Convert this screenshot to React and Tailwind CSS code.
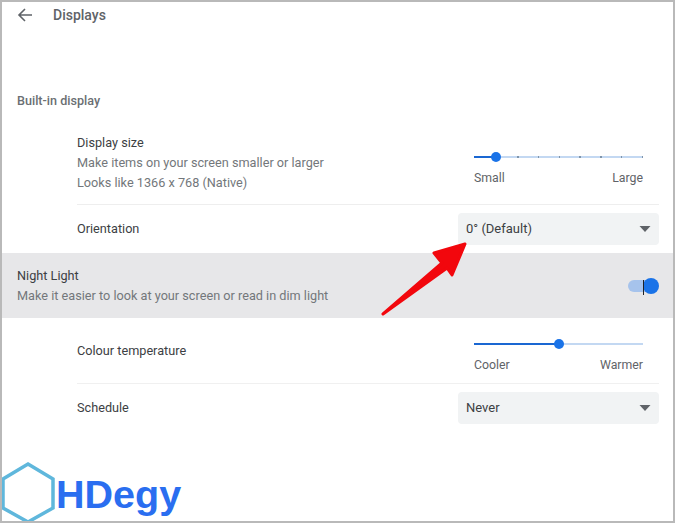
import React from 'react';

const Caret = () => (
  <svg width="12" height="6" viewBox="0 0 12 6" className="shrink-0">
    <path d="M0.5 0 H11.5 L6 6 Z" fill="#5f6368" />
  </svg>
);

const Select = ({ value }) => (
  <div className="w-[201px] h-[32px] rounded bg-[#f1f3f4] flex items-center justify-between pl-2 pr-[8px] text-[13px] text-[#3c4043]">
    <span>{value}</span>
    <Caret />
  </div>
);

const Slider = ({ percent, ticks, left, right }) => (
  <div className="w-[169px] mr-[16px] flex flex-col">
    <div className="relative h-[14px]">
      <div className="absolute left-0 right-0 top-[6px] h-[1.5px] bg-[#c3d8f2]" />
      <div className="absolute left-0 top-[5.5px] h-[2px] bg-[#1a67d2]" style={{ width: `${percent}%` }} />
      {ticks && (
        <div className="absolute left-[43px] right-0 top-[6px] flex justify-between">
          {[0, 1, 2, 3, 4, 5, 6].map((t) => (
            <span key={t} className="w-[1.5px] h-[1.5px] bg-[#7f95ab]" />
          ))}
        </div>
      )}
      <div
        className="absolute top-[1.5px] w-[10px] h-[10px] -ml-[5px] rounded-full bg-[#1a73e8]"
        style={{ left: `${percent}%` }}
      />
    </div>
    <div className="flex justify-between text-[12.3px] leading-[14px] text-[#5f6368] mt-[7px]">
      <span>{left}</span>
      <span>{right}</span>
    </div>
  </div>
);

const App = () => {
  return (
    <div
      className="relative w-[675px] h-[523px] overflow-hidden bg-white border-2 border-[#b9b9b9] text-[12.7px]"
      style={{ fontFamily: 'Roboto, sans-serif' }}
    >
      {/* Header */}
      <div className="flex items-center h-[26px] pl-[15px]">
        <svg width="16" height="16" viewBox="0 0 16 16" fill="none" stroke="#5f6368" strokeWidth="1.6">
          <path d="M15 8 H2 M8 2 L2 8 L8 14" />
        </svg>
        <span className="ml-[20px] text-[14px] font-medium text-[#5f6368]">Displays</span>
      </div>

      <div className="pl-[15px] mt-[65px] text-[12.6px] leading-[16px] font-medium text-[#6b6f73]">Built-in display</div>

      {/* Display size */}
      <div className="ml-[75px] mr-[14px] mt-[24px] flex justify-between items-start h-[72px] border-b border-[#eeeeee]">
        <div className="flex flex-col leading-[20px] text-[#73777b]">
          <span className="text-[#3c4043]">Display size</span>
          <span>Make items on your screen smaller or larger</span>
          <span>Looks like 1366 x 768 (Native)</span>
        </div>
        <div className="mt-[17px]">
          <Slider percent={12.8} ticks left="Small" right="Large" />
        </div>
      </div>

      {/* Orientation */}
      <div className="ml-[75px] mr-[14px] h-[48px] flex items-center justify-between text-[#3c4043]">
        <span>Orientation</span>
        <Select value="0° (Default)" />
      </div>

      {/* Night Light */}
      <div className="h-[65px] bg-[#e7e7e9] flex items-center justify-between pl-[15px] pr-[14px]">
        <div className="flex flex-col leading-[20px]">
          <span className="text-[#3c4043]">Night Light</span>
          <span className="text-[#73777b]">Make it easier to look at your screen or read in dim light</span>
        </div>
        <div className="relative w-[31px] h-[16px]">
          <div className="absolute left-0 right-[3px] top-[2px] h-[12px] rounded-full bg-[#a6c3ec]" />
          <div className="absolute right-0 top-0 w-[16px] h-[16px] rounded-full bg-[#1a73e8]" />
          <div className="absolute left-[15px] top-[2px] w-[1px] h-[15px] bg-[#202124]" />
        </div>
      </div>

      {/* Colour temperature */}
      <div className="ml-[75px] mr-[14px] h-[66px] pt-[19px] flex justify-between items-start border-b border-[#f0f0f0]">
        <span className="leading-[28px] text-[#3c4043]">Colour temperature</span>
        <Slider percent={50} left="Cooler" right="Warmer" />
      </div>

      {/* Schedule */}
      <div className="ml-[75px] mr-[14px] h-[48px] flex items-center justify-between text-[#3c4043]">
        <span>Schedule</span>
        <Select value="Never" />
      </div>

      {/* Annotation arrow over the page */}
      <svg className="absolute left-[-2px] top-[-2px]" width="675" height="523" viewBox="0 0 675 523" fill="none">
        <path
          d="M383 314 L442 263 L434 253 L465 244 L452 275 L447 268 Z"
          fill="#f2070d"
          stroke="#f2070d"
          strokeWidth="3"
          strokeLinejoin="round"
        />
      </svg>

      {/* Watermark */}
      <div className="absolute left-[-2px] top-[459px] flex items-start">
        <svg width="56" height="62" viewBox="0 0 56 62" fill="none" className="shrink-0">
          <path d="M28 3 L53 18 L53 47 L28 61 L3 47 L3 18 Z" fill="white" stroke="#5fb7dc" strokeWidth="3.5" />
        </svg>
        <span
          className="text-[39.5px] leading-[46px] font-bold text-[#2a6ef0] mt-[10px]"
          style={{ fontFamily: '"Liberation Sans", sans-serif' }}
        >
          HDegy
        </span>
      </div>
    </div>
  );
};

export default App;
